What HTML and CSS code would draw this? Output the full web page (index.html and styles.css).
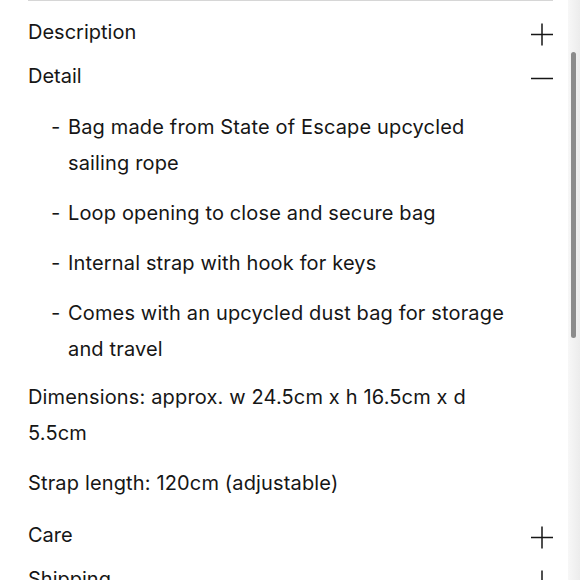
FILE: index.html
```html
<!DOCTYPE html>
<html lang="en">
<head>
    <meta charset="UTF-8">
    <title>Product details</title>
    <link rel="stylesheet" href="styles.css">
</head>
<body>
<div id="page">
    <div class="accordion">
        <div class="row">
            <span class="title">Description</span>
            <svg class="icon" viewBox="0 0 22 22"><path d="M0 11H22M11 0V22"/></svg>
        </div>
        <div class="row">
            <span class="title">Detail</span>
            <svg class="icon" viewBox="0 0 22 22"><path d="M0 11H22"/></svg>
        </div>
        <div class="panel">
            <ul class="dash-list">
                <li>Bag made from State of Escape upcycled sailing rope</li>
                <li>Loop opening to close and secure bag</li>
                <li>Internal strap with hook for keys</li>
                <li>Comes with an upcycled dust bag for storage and travel</li>
            </ul>
            <p>Dimensions: approx. w 24.5cm x h 16.5cm x d 5.5cm</p>
            <p>Strap length: 120cm (adjustable)</p>
        </div>
        <div class="row">
            <span class="title">Care</span>
            <svg class="icon" viewBox="0 0 22 22"><path d="M0 11H22M11 0V22"/></svg>
        </div>
        <div class="row">
            <span class="title">Shipping</span>
            <svg class="icon" viewBox="0 0 22 22"><path d="M0 11H22M11 0V22"/></svg>
        </div>
    </div>
</div>
<div id="scrollbar"><span class="thumb"></span></div>
</body>
</html>
```

FILE: styles.css
```css
*{
    margin: 0;
    padding: 0;
}
html, body{
    height: 100%;
    overflow: hidden;
}
body{
    font-family: Inter, "Noto Sans", sans-serif;
    font-size: 20px;
    color: #161616;
    background: #fff;
}
ul{
    list-style: none;
}

#page{
    padding: 0 27px 0 28px;
}

.accordion{
    border-top: 1px solid #d6d6d6;
    padding-top: 9px;
}

.row{
    height: 44px;
    display: flex;
    align-items: center;
    justify-content: space-between;
}
.icon{
    width: 22px;
    height: 23px;
    margin-top: 4px;
    stroke: #161616;
    stroke-width: 1.5;
    fill: none;
}

.panel{
    padding: 11px 40px 0 0;
    line-height: 36px;
    letter-spacing: 0.15px;
}
.dash-list{
    padding-left: 40px;
}
.dash-list li{
    list-style-type: "- ";
    margin-bottom: 14px;
}
.dash-list li:last-child{
    margin-bottom: 12px;
}
.panel p{
    margin-bottom: 14px;
}
.panel p:last-child{
    margin-bottom: 12px;
}

#scrollbar{
    position: fixed;
    top: 0;
    right: 0;
    width: 12px;
    height: 100%;
    background: linear-gradient(to right, #f7f7f7, #ececec);
}
#scrollbar .thumb{
    position: absolute;
    left: 3px;
    top: 52px;
    width: 5px;
    height: 286px;
    border-radius: 3px;
    background: #8c8c8c;
}
```
